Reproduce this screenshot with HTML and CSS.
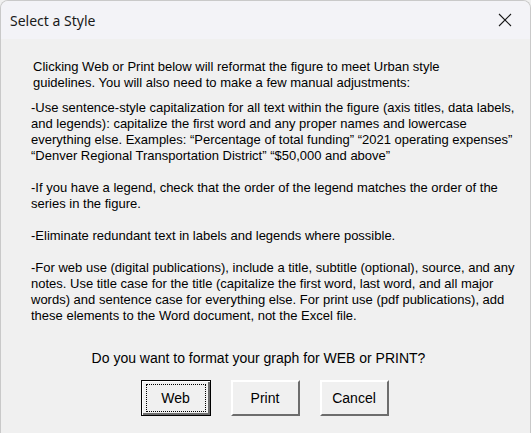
FILE: index.html
```html
<!DOCTYPE html>
<html lang="en">
<head>
    <meta charset="UTF-8">
    <meta name="viewport" content="width=device-width, initial-scale=1.0">
    <title>Select a Style</title>
    <link rel="stylesheet" href="styles.css">
</head>
<body>
    <div class="window">
        <!-- Title bar -->
        <div class="title-bar">
            <span class="title">Select a Style</span>
            <button class="close-btn" aria-label="Close">
                <svg width="14" height="14" viewBox="0 0 14 14">
                    <path d="M1 1 L13 13 M13 1 L1 13" stroke="#1a1a1a" stroke-width="1.1" fill="none"/>
                </svg>
            </button>
        </div>

        <!-- Dialog content -->
        <div class="content">
            <p class="intro">Clicking Web or Print below will reformat the figure to meet Urban style<br>guidelines. You will also need to make a few manual adjustments:</p>

            <p>-Use sentence-style capitalization for all text within the figure (axis titles, data labels,<br>and legends): capitalize the first word and any proper names and lowercase<br>everything else. Examples: “Percentage of total funding” “2021 operating expenses”<br>“Denver Regional Transportation District” “$50,000 and above”</p>

            <p>-If you have a legend, check that the order of the legend matches the order of the<br>series in the figure.</p>

            <p>-Eliminate redundant text in labels and legends where possible.</p>

            <p>-For web use (digital publications), include a title, subtitle (optional), source, and any<br>notes. Use title case for the title (capitalize the first word, last word, and all major<br>words) and sentence case for everything else. For print use (pdf publications), add<br>these elements to the Word document, not the Excel file.</p>

            <div class="question">Do you want to format your graph for WEB or PRINT?</div>

            <div class="buttons">
                <button class="btn default"><span class="focus">Web</span></button>
                <button class="btn"><span>Print</span></button>
                <button class="btn"><span>Cancel</span></button>
            </div>
        </div>
    </div>
</body>
</html>
```

FILE: styles.css
```css
body {
    margin: 0;
    padding: 0;
    background-color: #f0f0f0;
    font-family: "Liberation Sans", Arial, sans-serif;
}

.window {
    width: 531px;
    height: 433px;
    box-sizing: border-box;
    border: 1px solid #c9c9c9;
    border-bottom: none;
    border-radius: 8px 8px 0 0;
    overflow: hidden;
    background-color: #f0f0f0;
}

/* Title bar */
.title-bar {
    height: 38px;
    background-color: #f3f3f7;
    display: flex;
    align-items: center;
    justify-content: space-between;
    padding: 0 18px 0 9px;
}

.title {
    font-family: "Noto Sans", "Open Sans", sans-serif;
    font-size: 14px;
    color: #1a1a1a;
}

.close-btn {
    background: none;
    border: none;
    padding: 0;
    display: flex;
    cursor: pointer;
}

/* Content */
.content {
    padding: 20px 0 0 30px;
    color: #000;
    font-size: 13px;
    line-height: 16px;
}

.content p {
    margin: 0 0 16px 0;
}

.content p.intro {
    margin: 0 0 9px 2px;
}

.question {
    margin-top: 26px;
    font-size: 14px;
    text-align: center;
    padding-right: 44px;
}

.buttons {
    display: flex;
    justify-content: center;
    gap: 20px;
    margin-top: 14px;
    padding-right: 32px;
}

/* Classic 3D buttons */
.btn {
    width: 69px;
    height: 36px;
    padding: 0;
    background-color: #f0f0f0;
    border: 2px solid;
    border-color: #ffffff #6d6d6d #6d6d6d #ffffff;
    font-family: inherit;
    font-size: 14px;
    color: #000;
    display: flex;
    align-items: center;
    justify-content: center;
}

.btn.default {
    width: 70px;
    border: 1px solid #000;
    box-shadow: inset 1px 1px 0 #ffffff, inset -2px -2px 0 #6d6d6d;
}

.btn .focus {
    width: 58px;
    height: 26px;
    border: 1px dotted #000;
    display: flex;
    align-items: center;
    justify-content: center;
}
```
